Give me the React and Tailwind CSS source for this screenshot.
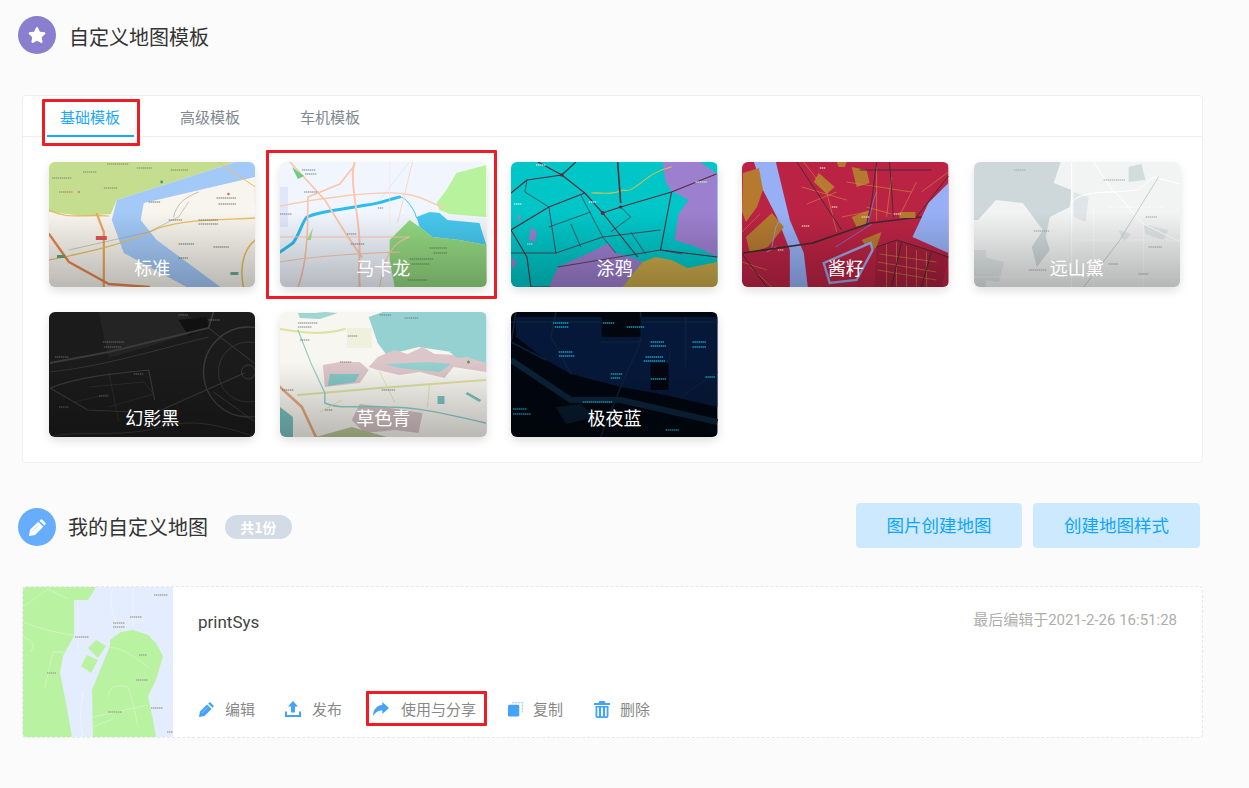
import React from 'react'
import { FaStar } from 'react-icons/fa'

const cjk = { fontFamily: '"Noto Sans CJK SC", "Noto Sans", sans-serif' }

// tiny blobs standing in for the unreadable map labels
const Marks = ({ items, fill, o = 0.5 }) => (
  <g stroke={fill} opacity={o} strokeWidth="1.9" strokeDasharray="1.5 .5" fill="none">
    {items.map(([x, y, w], i) => <path key={i} d={`M${x} ${y}h${w}`} />)}
  </g>
)

const Lines = ({ d, stroke, w = 1, o = 1 }) => (
  <path d={d} fill="none" stroke={stroke} strokeWidth={w} opacity={o} strokeLinejoin="round" strokeLinecap="round" />
)

const MapStandard = () => (
  <>
    <rect width="207" height="125" fill="#f8f5ee" />
    <path d="M0 0H187L131 18L68 38L62 52L36 54L0 50Z" fill="#c5dd8e" />
    <path d="M187 0L207 0V15L151 28L95 41L92 58L108 78L172 125H138L75 91L63 58L68 38L131 18Z" fill="#a3c9f8" />
    <Lines d="M0 48C20 58 30 52 60 54" stroke="#e6b860" w="1.2" />
    <Lines d="M48 52L55 70L55 125" stroke="#eba860" w="2.2" />
    <Lines d="M0 98C30 92 70 85 110 66C140 56 180 58 207 56" stroke="#e9c060" w="1.3" />
    <Lines d="M0 72L20 100L60 122L100 125" stroke="#e8854a" w="2.4" />
    <Lines d="M195 125C190 100 198 85 207 78" stroke="#e8c060" w="1.6" />
    <Lines d="M20 88L100 70L130 55L140 40" stroke="#999" w="0.5" />
    <Lines d="M125 55C128 42 135 36 150 30" stroke="#b0b0b0" w="0.8" />
    <Lines d="M170 0L207 25V40" stroke="#e8c060" w="1" />
    <rect x="47" y="74" width="11" height="4" fill="#e25555" />
    <rect x="8" y="93" width="8" height="3" fill="#5aa67a" />
    <rect x="182" y="110" width="8" height="3" fill="#6aaa9a" />
    <circle cx="113" cy="20" r="1.4" fill="#3ca55c" />
    <circle cx="180" cy="32" r="1.2" fill="#d55" />
    <circle cx="30" cy="30" r="1.2" fill="#d88" />
    <Marks fill="#86896a" items={[[3,16,20],[34,10,14],[88,6,16],[122,8,18],[58,2,22],[10,30,14],[55,26,14]]} />
    <Marks fill="#77756a" items={[[100,40,12],[168,36,20],[170,42,18],[120,58,14],[150,58,20],[150,62,20],[130,82,16],[165,85,16],[130,96,10]]} />
  </>
)

const MapMacaron = () => (
  <>
    <rect width="207" height="125" fill="#f1f6fe" />
    <rect x="0" y="25" width="8" height="40" fill="#e0e7fb" />
    <path d="M207 3L177 11L167 28L157 41L160 48L170 52L207 55Z" fill="#b8f29c" />
    <path d="M137 55L150 50L160 51L168 58L200 61L207 83L180 78L153 75L140 65Z" fill="#47c8ee" />
    <path d="M110 78L130 58L140 65L153 75L180 78L207 83V125H115L110 98Z" fill="#93d880" />
    <Lines d="M0 90L13 81C20 72 22 60 27 55C40 49 60 48 87 43C100 42 110 37 120 35" stroke="#2dbcf0" w="3" />
    <Lines d="M117 35C125 33 130 42 135 50L137 56" stroke="#46c3ee" w="1" />
    <Lines d="M100 38L130 0" stroke="#c3e8fa" w="0.6" />
    <Lines d="M0 44C40 36 100 28 125 32C145 34 150 42 165 45" stroke="#fbcab0" w="1.4" />
    <Lines d="M75 0C70 14 76 40 78 60C82 85 78 105 80 125" stroke="#fbc7ad" w="2" />
    <Lines d="M10 0L45 38L65 70L82 95" stroke="#fbc7ad" w="1.8" />
    <Lines d="M75 3L60 22L28 35C28 60 28 100 18 125" stroke="#fbc4a8" w="1.6" />
    <Lines d="M0 75H60H130C115 80 105 90 100 125" stroke="#fbcab0" w="1.1" />
    <Lines d="M0 100C30 95 60 92 120 90" stroke="#fbcab0" w="1.1" />
    <Lines d="M133 0L118 60" stroke="#fbd5c4" w="1" />
    <Lines d="M110 0V60" stroke="#fde0d4" w="0.6" />
    <path d="M12 5L24 14L18 17Z" fill="#69cf7f" />
    <path d="M27 78L33 66L31 78Z" fill="#a5e28c" />
    <Marks fill="#7c8595" items={[[22,8,14],[25,12,12],[24,30,14],[98,46,6],[0,52,12],[67,72,10],[71,82,14]]} />
    <Marks fill="#5d8a5f" items={[[150,86,18],[154,91,14],[130,97,24],[132,102,18],[128,118,20]]} />
  </>
)

const MapGraffiti = () => (
  <>
    <rect width="207" height="125" fill="#00c6c8" />
    <path d="M152 0H190L207 12V95L186 85L164 78L168 52L178 38L160 28L155 20Z" fill="#9d7fcf" />
    <path d="M38 125L47 105L78 91L98 81L105 91L123 96L132 100L123 111L112 125Z" fill="#9d7fcf" />
    <path d="M112 125L123 111L132 100L145 95L161 98L177 106L207 100V125Z" fill="#c8a949" />
    <path d="M20 65L26 70L24 80L18 78Z M6 50L10 56L8 60Z M0 95L6 100L2 108Z" fill="#9d7fcf" />
    <Lines d="M81 31C90 30 100 34 112 28C125 32 135 10 161 5" stroke="#d9c04d" w="1.1" />
    <g fill="none" stroke="#5d2a3c" strokeLinejoin="round">
      <path d="M107 0L110 41" strokeWidth="1.6" />
      <path d="M0 31L16 18L51 13L74 31L92 51L110 45L161 30L206 12M51 13L65 0M27 0L51 13" strokeWidth="1.2" />
      <path d="M0 68L38 45L74 31M92 51L127 95M161 30L150 88L207 95M0 68L16 95L20 125" strokeWidth="1.1" />
      <path d="M38 45L45 91M0 91L45 91L92 75L150 68M47 105L150 88M20 125H40" strokeWidth="0.8" />
      <path d="M70 33L92 75L105 91M38 65L80 50M60 62L70 85M110 45L120 55L100 70M120 70L135 92" strokeWidth="0.7" />
      <path d="M16 18L14 30L38 45M150 88L172 92" strokeWidth="0.7" />
    </g>
    <circle cx="51" cy="13" r="1.8" fill="#5d2a3c" />
    <circle cx="92" cy="51" r="2" fill="#5d2a3c" />
    <circle cx="110" cy="45" r="1.6" fill="#5d2a3c" />
    <Marks fill="#b9e6dc" o={0.7} items={[[25,3,10],[185,20,12],[3,42,8],[78,40,8],[16,82,6]]} />
  </>
)

const MapSauce = () => (
  <>
    <rect width="207" height="125" fill="#bb2344" />
    <path d="M12 0H34L48 58L62 91L66 125H48L48 88L35 55L21 28Z" fill="#97b0f5" />
    <path d="M207 21L187 41L171 75L207 91Z" fill="#97b0f5" />
    <path d="M1 11L17 6L21 28L15 45L4 60L0 50Z M4 75L30 51L42 65L26 85L8 91Z M77 11L93 25L85 32L72 20Z M110 5L125 8L128 21L115 25Z M110 55L128 48L125 62L115 65Z M95 0H105L103 5L97 5Z" fill="#b57a30" />
    <path d="M120 78L140 70L135 85L128 90Z" fill="#b57a30" />
    <path d="M82 101L129 81L131 88L115 118L88 121Z" fill="#bb2344" stroke="#98a6e6" strokeWidth="2.4" />
    <Lines d="M30 85L34 65L40 55M25 90L34 85" stroke="#8fa5e8" w="0.8" />
    <path d="M133 125L135 85L155 78L187 88L207 95L200 125Z" fill="#a81f3e" />
    <Lines d="M135 30C130 40 130 55 125 62M94 85L130 62" stroke="#7c6cc0" w="1" />
    <g fill="none" stroke="#cf8b3c" strokeWidth="0.6">
      <path d="M62 0L85 30M60 25L105 38M65 42L95 30M85 30L95 70M105 20L170 30M125 45L150 52M100 55L125 50" />
      <path d="M135 5V60M150 15L145 55M175 20L160 50M180 30L207 10" />
      <path d="M0 70L18 52M8 105L30 125M0 100L25 108" />
      <path d="M138 92L195 100M136 100L195 110M136 108L195 118M145 82V125M155 80V125M165 84V125M175 88V125M185 90V125" />
    </g>
    <g fill="none" stroke="#3c2a30" strokeLinejoin="round">
      <path d="M1 91L71 81L129 61L180 55" strokeWidth="1.7" />
      <path d="M55 0L100 68M148 0L152 55M118 8H190M0 92L25 125M135 85L155 78L187 88L207 95M160 80L150 125M190 90L180 125M135 0L130 40L125 62" strokeWidth="0.9" />
      <path d="M207 14L175 55" strokeWidth="0.9" />
    </g>
    <rect x="158" y="50" width="16" height="6" fill="#b57a30" />
    <Marks fill="#e6c4a8" o={0.7} items={[[78,6,6],[90,45,6],[60,64,8],[120,55,8],[152,52,8],[36,88,6]]} />
  </>
)

const MapDai = () => (
  <>
    <rect width="207" height="125" fill="#f2f3f3" />
    <path d="M0 0H87L80 21L98 28L96 45L76 55L72 75L76 88L63 105L58 85L69 68L49 41L22 38L4 58L0 58Z" fill="#ced8da" />
    <path d="M0 88H12V125H0Z M100 30L115 35L112 60L100 55Z M145 68L158 72L150 80Z M170 62L195 68L190 78L172 72Z M10 95L30 100L25 120L10 118Z" fill="#e0e6e7" />
    <path d="M155 5L168 2L172 18L155 20Z" fill="#d3dcdd" />
    <g fill="none" stroke="#ffffff">
      <path d="M98 0V125M98 40C105 32 120 30 140 30C150 35 160 55 170 62L207 80M120 0L140 30M140 30L165 28L180 15L207 22" strokeWidth="1" />
      <path d="M0 115H207M100 78H207M120 45V125M170 60V125M135 45H190" strokeWidth="0.7" strokeDasharray="3 1" />
    </g>
    <Lines d="M110 125L145 80L185 15" stroke="#b5babb" w="0.7" />
    <Marks fill="#9aa2a3" o={0.45} items={[[40,8,12],[130,18,22],[172,55,12],[60,69,16],[175,85,14],[135,102,10],[55,108,18],[165,112,10]]} />
  </>
)

const MapBlack = () => (
  <>
    <rect width="207" height="125" fill="#1b1b1b" />
    <path d="M50 0H135L160 16L88 38L60 46L55 25Z" fill="#242424" />
    <path d="M130 8L158 5L160 16L140 24Z" fill="#111" />
    <g fill="none" stroke="#3a3a3a">
      <path d="M1 51L60 40L160 16L165 0" strokeWidth="1.8" />
      <path d="M1 60C50 55 100 40 160 25" strokeWidth="0.8" />
      <path d="M1 76L39 98L106 101L196 61M1 76C30 65 60 62 100 58L106 88" strokeWidth="1.2" />
      <path d="M160 16L207 52M165 80L207 110" strokeWidth="1" />
      <circle cx="200" cy="60" r="45" strokeWidth="1.3" />
      <circle cx="200" cy="60" r="30" strokeWidth="0.8" />
      <circle cx="200" cy="60" r="7" strokeWidth="1" />
      <path d="M60 60L70 110M40 75L95 70L105 82L60 95M25 90L60 82" strokeWidth="0.5" />
      <path d="M0 125C30 118 60 125 100 118C130 110 150 105 207 125" strokeWidth="0.9" />
    </g>
    <Marks fill="#6a6a6a" o={0.45} items={[[54,30,22],[55,35,18],[6,45,14],[50,84,10],[10,95,10],[85,62,10],[100,106,12],[160,8,12],[130,3,10]]} />
  </>
)

const MapGrass = () => (
  <>
    <rect width="207" height="125" fill="#f8f6f0" />
    <path d="M89 5L103 0H207V55L179 41L139 35L107 43L98 31Z" fill="#95d1d0" />
    <path d="M18 1H35L45 0L58 1L40 7L20 6Z" fill="#9fd6d0" />
    <path d="M98 45L115 38L128 42L143 35L155 42L179 43L207 51V60L174 55L165 66L140 60L120 63L98 58L89 55Z" fill="#dcc6ca" />
    <path d="M105 52L150 50L172 52L160 60L120 56Z M170 40L185 35L190 45L178 46Z" fill="#95d1d0" />
    <path d="M43 53L60 50L80 50L89 58L80 71L45 75Z" fill="#dcc6ca" />
    <path d="M50 62L80 62L75 70L48 74Z" fill="#84c8c6" />
    <path d="M67 16H92V36H67Z" fill="#eff0de" />
    <path d="M80 92L110 96L143 101L139 121L115 118L85 121L72 108Z" fill="#d6c3c6" />
    <path d="M36 125L72 115L107 125Z" fill="#b9c895" />
    <path d="M0 95L13 105V125H0Z" fill="#7ac0c0" />
    <Lines d="M18 83L100 76L206 68" stroke="#dde29e" w="2.2" />
    <Lines d="M0 17C20 20 40 24 65 17" stroke="#dde29e" w="2" />
    <Lines d="M18 18L31 51L45 81" stroke="#8fd0c8" w="1.2" />
    <Lines d="M45 81L45 91C60 98 85 93 107 95C130 95 152 98 206 111" stroke="#88cfcb" w="1.5" />
    <Lines d="M0 75L22 95L36 125" stroke="#e8a87c" w="2.6" />
    <Lines d="M100 60L115 90M150 72L148 95M40 100L62 88" stroke="#dde29e" w="0.8" />
    <path d="M158 84L165 84L165 92L158 92Z" fill="#7cc4bd" />
    <path d="M188 80L202 88L200 90L186 82Z" fill="#7cc4bd" />
    <circle cx="189" cy="50" r="1.5" fill="#4fa83d" />
    <Marks fill="#6f7a7a" o={0.45} items={[[18,11,20],[18,15,14],[100,3,12],[20,28,10],[60,50,12],[68,24,10],[102,78,14],[45,98,8],[2,78,12],[125,6,14]]} />
  </>
)

const MapNight = () => (
  <>
    <rect width="207" height="125" fill="#01060f" />
    <path d="M5 5H207V95L150 82L110 75L60 62L35 48L5 25Z" fill="#06183a" />
    <g fill="none" stroke="#0a2338">
      <path d="M0 48L60 88L110 88L207 110" strokeWidth="6" />
      <path d="M5 0L0 30L35 48M45 0L40 25L60 62M90 30H130M130 0V30M130 30L110 75M160 40L150 82M0 10H207M175 5V55" strokeWidth="1.6" />
      <path d="M110 75L90 125M170 85L207 60" strokeWidth="1.4" />
    </g>
    <rect x="91" y="5" width="39" height="20" fill="#01060f" />
    <rect x="140" y="51" width="18" height="27" fill="#01060f" />
    <path d="M45 95L70 92L85 105L55 112Z" fill="#0a2338" opacity="0.7" />
    <Marks fill="#1bb6d8" o={0.6} items={[[42,11,16],[44,15,14],[92,11,12],[116,15,18],[140,30,14],[140,34,16],[48,40,14],[48,44,16],[135,45,18],[133,49,22],[100,62,12],[100,66,10],[140,67,16],[72,90,30],[2,97,14],[2,102,18],[155,118,14],[182,30,14],[182,35,14],[195,65,10]]} />
  </>
)

const templates = [
  ['标准', MapStandard],
  ['马卡龙', MapMacaron],
  ['涂鸦', MapGraffiti],
  ['酱籽', MapSauce],
  ['远山黛', MapDai],
  ['幻影黑', MapBlack],
  ['草色青', MapGrass],
  ['极夜蓝', MapNight],
]

const TemplateCard = ({ name, Map }) => (
  <div className="relative h-[125px] overflow-hidden rounded-md shadow-[0_4px_10px_rgba(0,0,0,0.12)]">
    <svg viewBox="0 0 207 125" preserveAspectRatio="none" className="block h-full w-full blur-[0.5px]">
      <Map />
    </svg>
    <div className="absolute inset-0 bg-gradient-to-b from-transparent from-40% to-black/25" />
    <span className="absolute inset-x-0 bottom-[7px] text-center text-[18px] leading-[26px] text-white">{name}</span>
  </div>
)

// fat pencil, eraser end at the top right
const PencilIcon = ({ size = 16, color = '#43a3fb', slit = 'white' }) => (
  <svg viewBox="0 0 16 16" width={size} height={size}>
    <path d="M0 16L1 10.2L8.6 2.6L13.4 7.4L5.8 15Z" fill={color} />
    <path d="M9.8 1.6L10.9 .6Q11.6 0 12.4 .6L15.4 3.6Q16 4.4 15.4 5.1L14.4 6.2Z" fill={color} />
    <path d="M3 11.8L9 5.8" stroke={slit} strokeWidth="0.8" opacity="0.5" />
  </svg>
)

const UploadIcon = () => (
  <svg viewBox="0 0 16 16" className="h-[16px] w-[16px]" fill="#43a3fb">
    <path d="M8 0L13 5.4H10V11.4H6V5.4H3Z" />
    <path d="M0 10.5H2V14H14V10.5H16V15.5Q16 16 15.5 16H.5Q0 16 0 15.5Z" />
  </svg>
)

const ShareIcon = () => (
  <svg viewBox="0 0 18 16" className="h-[16px] w-[18px]" fill="#43a3fb">
    <path d="M10.5 0L18 6.8L10.5 13.6V9.8C6 9.8 3 11.5 0 16C0 9 4 3.8 10.5 3.4Z" />
  </svg>
)

const CopyIcon = () => (
  <svg viewBox="0 0 16 16" className="h-[15px] w-[15px]">
    <rect x="0" y="3" width="12" height="12.5" rx="1.5" fill="#43a3fb" />
    <path d="M4.5 .7H15.3V11.5" fill="none" stroke="#9fd0fd" strokeWidth="1.3" strokeDasharray="2 1.2" />
  </svg>
)

const TrashIcon = () => (
  <svg viewBox="0 0 16 17" className="h-[17px] w-[16px]" fill="#43a3fb">
    <path d="M5.5 0H10.5L11.5 2H16V4H0V2H4.5Z" />
    <path d="M1.5 5H14.5V15Q14.5 17 12.5 17H3.5Q1.5 17 1.5 15ZM3.3 6.5V15.2H5V6.5ZM7.1 6.5V15.2H8.9V6.5ZM11 6.5V15.2H12.7V6.5Z" fillRule="evenodd" />
  </svg>
)

const Action = ({ icon, label, gap = 'gap-[11px]', className = '' }) => (
  <div className={`flex items-center ${gap} ${className}`}>
    <span className="flex w-[16px] justify-center">{icon}</span>
    <span className="text-[15px] leading-[20px] text-[#888888]">{label}</span>
  </div>
)

const ThumbMap = () => (
  <svg viewBox="0 0 150 150" className="block h-[150px] w-[150px] shrink-0 blur-[0.3px]">
    <rect width="150" height="150" fill="#e3edfd" />
    <path d="M0 0H73L65 13L51 13V49L40 69L37 86L43 116L49 150H0Z" fill="#b9f3a2" />
    <path d="M87 53L98 45L110 43L125 48L133 56L140 69L133 93L125 109L130 133L133 150H70L69 103L80 76L87 59Z" fill="#b9f3a2" />
    <path d="M65 61L73 53L83 59L75 71Z M58 79L64 68L75 73L68 86Z" fill="#b9f3a2" />
    <g fill="none" stroke="#d4f5c4" strokeWidth="0.8">
      <path d="M0 35Q25 45 50 48M0 20L25 2L45 12M0 50Q15 55 8 65M30 65H45M30 65L22 100" />
      <path d="M85 60Q100 60 125 80M85 110Q85 95 105 100Q110 115 115 140M70 130L125 118M70 140L90 132" />
    </g>
    <g fill="none" stroke="#f1f5fe" strokeWidth="0.8">
      <path d="M55 15V60M110 0V40M90 0C85 15 90 30 95 40M60 105Q55 130 60 150" />
    </g>
    <Marks fill="#9a9a8a" o={0.6} items={[[131,8,14],[107,30,12],[90,36,12],[90,40,12],[52,50,14],[24,86,9],[116,68,8],[113,93,12],[85,125,14],[128,121,12],[144,145,6]]} />
  </svg>
)

const App = () => {
  return (
    <div className="relative h-[788px] w-[1249px] overflow-hidden bg-[#fbfbfb] pl-[18px] pt-[16px]" style={cjk}>
      <div className="flex h-[38px] items-center gap-[13px]">
        <div className="flex h-[38px] w-[38px] items-center justify-center rounded-full bg-[#8a7fcf] text-white">
          <FaStar size={18} />
        </div>
        <h2 className="mt-[4px] text-[20px] font-normal leading-[28px] text-[#333333]">自定义地图模板</h2>
      </div>

      <div className="ml-[4px] mt-[41px] h-[368px] w-[1181px] rounded-[4px] border border-[#eceef0] bg-white">
        <div className="flex h-[41px] gap-[33px] border-b border-[#eceef0] pl-[24px]">
          <div className="h-[41px] w-[87px] border-b-2 border-[#1aa8fb] pt-[10px] pr-[1px] text-center text-[15px] leading-[22px] text-[#1aa8fb]">基础模板</div>
          <div className="h-[41px] w-[87px] pt-[10px] pr-[1px] text-center text-[15px] leading-[22px] text-[#808890]">高级模板</div>
          <div className="h-[41px] w-[87px] pt-[10px] pr-[1px] text-center text-[15px] leading-[22px] text-[#808890]">车机模板</div>
        </div>
        <div className="grid grid-cols-5 gap-x-[24.8px] gap-y-[25px] pl-[26px] pr-[22px] pt-[25px]">
          {templates.map(([name, Map]) => (
            <TemplateCard key={name} name={name} Map={Map} />
          ))}
        </div>
      </div>

      <div className="mt-[40px] flex h-[45px] w-[1182px] items-center">
        <div className="mt-[3px] flex h-[38px] w-[38px] items-center justify-center rounded-full bg-[#66aefd]">
          <PencilIcon size={17} color="#ffffff" slit="#66aefd" />
        </div>
        <h2 className="ml-[12px] mt-[3px] text-[20px] font-normal leading-[28px] text-[#333333]">我的自定义地图</h2>
        <span className="ml-[17px] mt-[3px] flex h-[24px] w-[67px] items-center justify-center rounded-full bg-[#d3dbe6] text-[14px] font-bold text-white">共1份</span>
        <button className="ml-auto h-[45px] w-[166px] rounded-[4px] bg-[#cce9fd] text-[17.5px] text-[#0ea5ff]">图片创建地图</button>
        <button className="ml-[11px] h-[45px] w-[167px] rounded-[4px] bg-[#cce9fd] text-[17.5px] text-[#0ea5ff]">创建地图样式</button>
      </div>

      <div className="ml-[4px] mt-[38px] flex h-[152px] w-[1181px] overflow-hidden rounded-[4px] border border-dashed border-[#e5e7ea] bg-white">
        <ThumbMap />
        <div className="flex-1 pl-[25px] pr-[25px]">
          <div className="flex h-[92px] items-start justify-between pt-[21px]">
            <span className="text-[17px] leading-[28px] text-[#444444]" style={{ fontFamily: 'Roboto, "Noto Sans CJK SC", sans-serif' }}>printSys</span>
            <span className="pt-[1px] text-[15px] leading-[22px] text-[#b0aeaa]" style={{ fontFamily: 'Roboto, "Noto Sans CJK SC", sans-serif' }}>最后编辑于2021-2-26 16:51:28</span>
          </div>
          <div className="mt-[20px] flex items-center">
            <Action icon={<PencilIcon size={15} />} label="编辑" />
            <Action className="ml-[30px]" icon={<UploadIcon />} label="发布" />
            <Action className="ml-[31px]" gap="gap-[12px]" icon={<ShareIcon />} label="使用与分享" />
            <Action className="ml-[31px]" gap="gap-[10px]" icon={<CopyIcon />} label="复制" />
            <Action className="ml-[31px]" gap="gap-[10px]" icon={<TrashIcon />} label="删除" />
          </div>
        </div>
      </div>

      {/* red annotation boxes on top of the screenshot */}
      <div className="absolute left-[42px] top-[99px] h-[47px] w-[98px] rounded-[1px] border-[3px] border-[#ee1c25]" />
      <div className="absolute left-[266px] top-[150px] h-[149px] w-[231px] rounded-[1px] border-[3px] border-[#ee1c25]" />
      <div className="absolute left-[366px] top-[691px] h-[35px] w-[121px] rounded-[1px] border-[3px] border-[#ee1c25]" />
    </div>
  )
}

export default App
